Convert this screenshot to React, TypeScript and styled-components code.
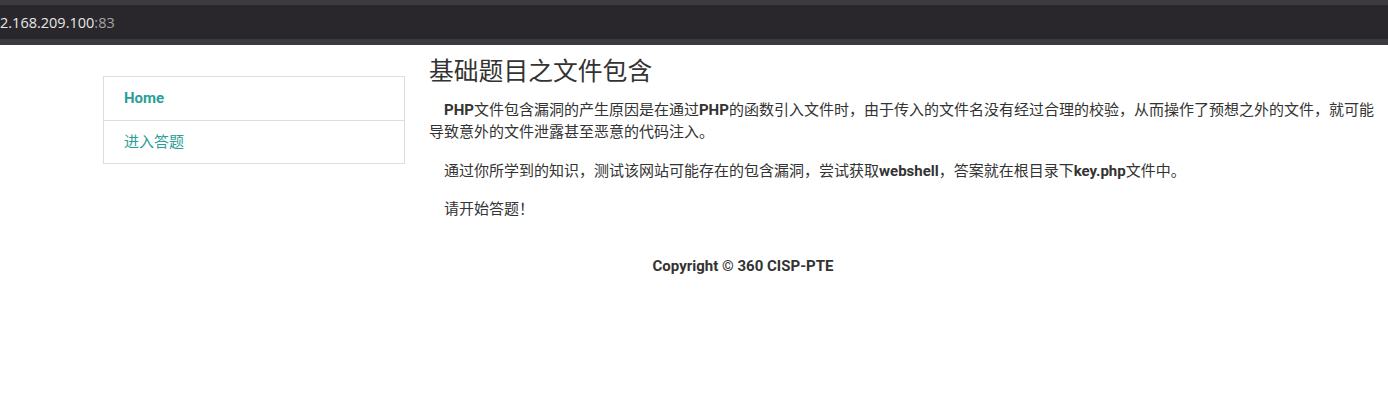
import styled, { createGlobalStyle } from "styled-components";

const GlobalStyle = createGlobalStyle`
    html, body {
        margin: 0;
        padding: 0;
        background: #fff;
    }
    body {
        font-family: Roboto, "Noto Sans CJK SC", sans-serif;
        color: #333;
    }
`;

/* browser address bar strip at the top */
const AddressBar = styled.div`
    height: 34px;
    background-color: #29272b;
    border-top: 5px solid #3b3a3e;
    border-bottom: 6px solid #3b3a3e;
    display: flex;
    align-items: center;
    font-family: "Open Sans", "Noto Sans", sans-serif;
    font-size: 14.5px;
    color: #e6e6e6;
    white-space: nowrap;
    overflow: hidden;
`;

const Port = styled.span`
    color: #a3a3a3;
`;

const Container = styled.div`
    display: flex;
    padding-left: 103px;
`;

const SideNav = styled.ul`
    list-style: none;
    margin: 31px 0 0;
    padding: 0;
    width: 300px;
    flex-shrink: 0;
    align-self: flex-start;
    border: 1px solid #ddd;
`;

const NavItem = styled.li<{ $active?: boolean }>`
    height: ${(p) => (p.$active ? "43px" : "42px")};
    box-sizing: border-box;
    display: flex;
    align-items: center;
    padding-left: 20px;
    padding-bottom: ${(p) => (p.$active ? "2px" : "3px")};
    font-size: 15px;
    font-weight: ${(p) => (p.$active ? 700 : 400)};
    color: #2b9e98;
    & + & {
        border-top: 1px solid #ddd;
        height: 43px;
    }
`;

const Main = styled.main`
    margin-left: 24px;
    width: 952px;
    flex-shrink: 0;
`;

const Title = styled.h3`
    margin: 13px 0 13px;
    font-size: 24.8px;
    line-height: 28px;
    font-weight: 400;
    color: #333;
`;

const Para = styled.p`
    margin: 0 0 16.5px;
    font-size: 15px;
    line-height: 22px;
    text-indent: 15px;
    b {
        font-weight: 700;
    }
`;

const Footer = styled.footer`
    margin-left: 103px;
    width: 1280px;
    margin-top: 18px;
    text-align: center;
    font-size: 15px;
    line-height: 22px;
    font-weight: 700;
    color: #333;
`;

export default function App() {
    return (
        <>
            <GlobalStyle />
            <AddressBar>
                2.168.209.100<Port>:83</Port>
            </AddressBar>

            <Container>
                <SideNav>
                    <NavItem $active>Home</NavItem>
                    <NavItem>进入答题</NavItem>
                </SideNav>

                <Main>
                    <Title>基础题目之文件包含</Title>
                    <Para>
                        <b>PHP</b>文件包含漏洞的产生原因是在通过<b>PHP</b>的函数引入文件时，由于传入的文件名没有经过合理的校验，从而操作了预想之外的文件，就可能导致意外的文件泄露甚至恶意的代码注入。
                    </Para>
                    <Para>
                        通过你所学到的知识，测试该网站可能存在的包含漏洞，尝试获取<b>webshell</b>，答案就在根目录下<b>key.php</b>文件中。
                    </Para>
                    <Para>请开始答题！</Para>
                </Main>
            </Container>

            <Footer>Copyright © 360 CISP-PTE</Footer>
        </>
    );
}
